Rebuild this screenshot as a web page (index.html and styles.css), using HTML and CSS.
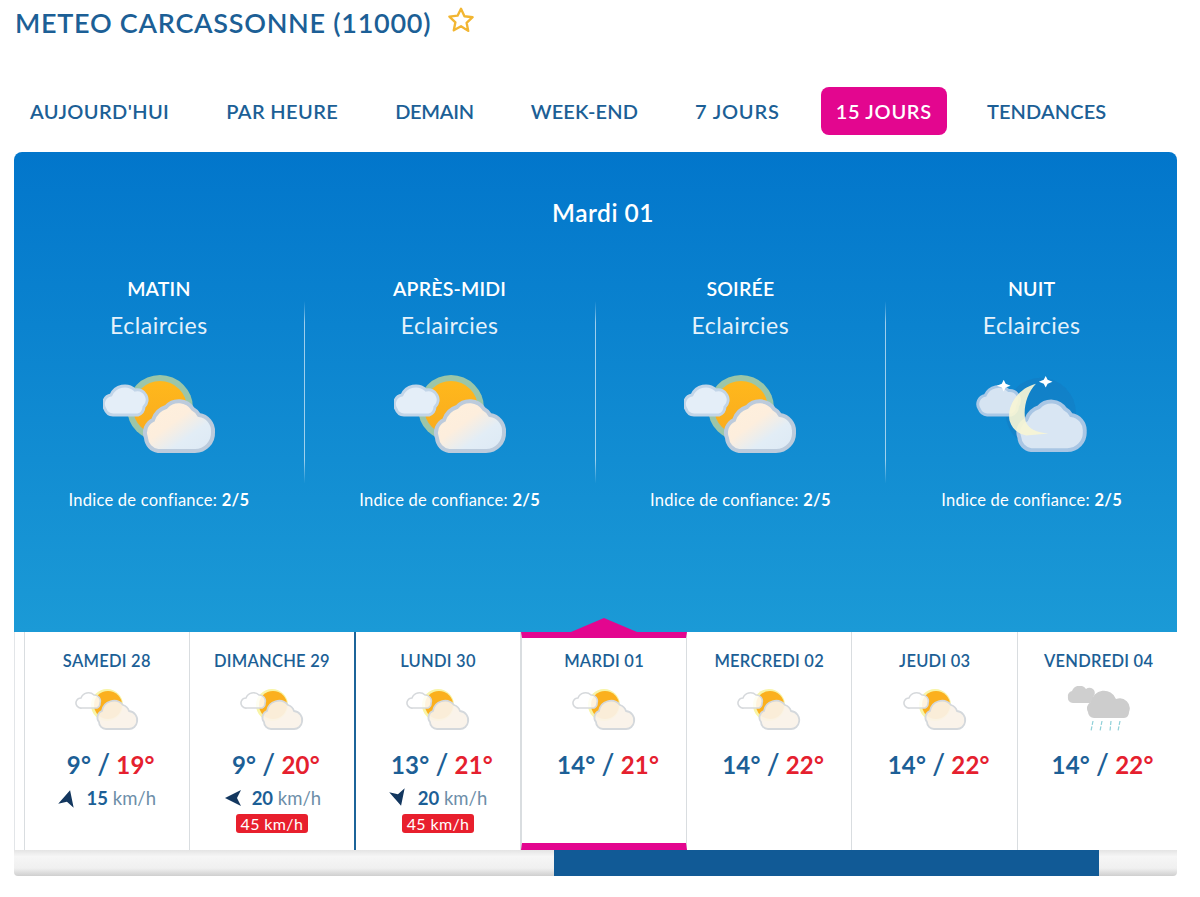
FILE: index.html
```html
<!DOCTYPE html>
<html lang="fr">
<head>
<meta charset="utf-8">
<title>Météo Carcassonne</title>
<link rel="stylesheet" href="styles.css">
</head>
<body>
<svg class="defs" width="0" height="0" aria-hidden="true">
  <defs>
    <linearGradient id="sunfill" x1="0" y1="0" x2="0" y2="1"><stop offset="0" stop-color="#ffb81c"/><stop offset="1" stop-color="#f9ab1e"/></linearGradient>
    <linearGradient id="cloudfill" x1="0" y1="0" x2="1" y2="1"><stop offset="0" stop-color="#fff0dc"/><stop offset="0.42" stop-color="#fdeedd"/><stop offset="0.68" stop-color="#e2edf6"/><stop offset="1" stop-color="#dce9f5"/></linearGradient>
    <symbol id="big-sun" viewBox="0 0 114 82">
      <circle cx="57" cy="36" r="33" fill="#9cc6a8"/>
      <circle cx="57" cy="36" r="27" fill="url(#sunfill)"/>
      <path d="M2 37a9 9 0 0 1 6-14 15 15 0 0 1 24-5 10 10 0 0 1 9 17 9 9 0 0 1-6 8H10a9 9 0 0 1-8-6z" fill="#e4eef8" stroke="#c2d5e8" stroke-width="3"/>
      <path d="M43 66a14 14 0 0 1 7-18 20 20 0 0 1 13-13 17 17 0 0 1 27 2 14 14 0 0 1 6 6 16 16 0 0 1 14 17 18 18 0 0 1-18 19H55a14 14 0 0 1-12-13z" fill="url(#cloudfill)" stroke="#bccbdc" stroke-width="4"/>
    </symbol>
    <symbol id="big-moon" viewBox="0 0 114 84">
      <circle cx="65" cy="42" r="36" fill="#1a6fb5" opacity=".28"/>
      <path d="M2 38a9 9 0 0 1 6-14 15 15 0 0 1 24-5 10 10 0 0 1 9 16 9 9 0 0 1-6 9H10a9 9 0 0 1-8-6z" fill="#d6e4f2" stroke="#a9c8e6" stroke-width="3"/>
      <path d="M43 67a14 14 0 0 1 7-18 20 20 0 0 1 13-13 17 17 0 0 1 27 2 14 14 0 0 1 6 6 16 16 0 0 1 14 17 18 18 0 0 1-18 19H55a14 14 0 0 1-12-13z" fill="#d9e6f3" stroke="#a9c6e4" stroke-width="4"/>
      <path d="M60 12C41 17 30 35 33 50c3 10 11 14 17 15l23-2c-13-1-20-5-23-11-4-12 0-30 10-40z" fill="#f7f5d5" fill-opacity=".92"/>
      <path d="M27 8l2 4 5 2-5 2-2 4-2-4-5-2 5-2zM70 4l2 4 5 2-5 2-2 4-2-4-5-2 5-2z" fill="#fff"/>
    </symbol>
    <symbol id="small-sun" viewBox="0 0 64 44">
      <circle cx="32" cy="17" r="16" fill="#f8f4a6"/>
      <circle cx="33" cy="17" r="14" fill="#fbb01e"/>
      <path d="M2 18a5 5 0 0 1 4-8 8 8 0 0 1 13-3 6 6 0 0 1 6 8 5 5 0 0 1-3 5H7a5 5 0 0 1-5-2z" fill="#fff" fill-opacity=".85" stroke="#d6d9dc" stroke-width="1.6"/>
      <path d="M24 34a7 7 0 0 1 3-11 12 12 0 0 1 21-6 9 9 0 0 1 6 6 9 9 0 0 1 8 11 8 8 0 0 1-8 7H31a7 7 0 0 1-7-7z" fill="#faf2e8" fill-opacity=".92" stroke="#d4d8dc" stroke-width="1.8"/>
    </symbol>
    <symbol id="small-rain" viewBox="0 0 64 48">
      <path d="M1 11a5 5 0 0 1 4-6 8 8 0 0 1 14-2 5 5 0 0 1 7 8 4 4 0 0 1-3 6H6a5 5 0 0 1-5-6z" fill="#cfcfcf"/>
      <path d="M21 26a7 7 0 0 1 3-10 13 13 0 0 1 25-3 10 10 0 0 1 13 13 6 6 0 0 1-5 6H27a6 6 0 0 1-6-6z" fill="#cdcdcd"/>
      <path d="M26 35l-2 10M35 35l-2 10M44 35l-1 10M53 35l-2 10" stroke="#8fd0d8" stroke-width="1.2" stroke-dasharray="4 1.5"/>
    </symbol>
    <symbol id="arrow" viewBox="-10 -10 20 20">
      <path d="M0-8 8 8 0 4-8 8z" fill="#13375f"/>
    </symbol>
  </defs>
</svg>

<header class="title-row">
  <h1 class="title">METEO CARCASSONNE (11000)</h1>
  <svg class="star" viewBox="0 0 26 26"><path d="M13 2.5l3.2 7 7.6.9-5.6 5.2 1.5 7.5L13 18.8l-6.7 3.8 1.5-7.5-5.6-5.2 7.6-.9z" fill="#fff" stroke="#f2b632" stroke-width="2.2" stroke-linejoin="round"/></svg>
</header>

<nav class="tabs">
  <a class="tab">AUJOURD'HUI</a>
  <a class="tab">PAR HEURE</a>
  <a class="tab tab-narrow">DEMAIN</a>
  <a class="tab tab-snug">WEEK-END</a>
  <a class="tab tab-wide">7 JOURS</a>
  <a class="tab tab-active">15 JOURS</a>
  <a class="tab tab-snug">TENDANCES</a>
</nav>

<main class="card">
  <section class="hero">
    <h2 class="hero-day">Mardi 01</h2>
    <div class="periods">
      <article class="period">
        <h3 class="period-name">MATIN</h3>
        <p class="period-desc">Eclaircies</p>
        <svg class="period-icon"><use href="#big-sun"/></svg>
        <p class="period-conf">Indice de confiance: <b>2/5</b></p>
      </article>
      <article class="period">
        <h3 class="period-name">APRÈS-MIDI</h3>
        <p class="period-desc">Eclaircies</p>
        <svg class="period-icon"><use href="#big-sun"/></svg>
        <p class="period-conf">Indice de confiance: <b>2/5</b></p>
      </article>
      <article class="period">
        <h3 class="period-name">SOIRÉE</h3>
        <p class="period-desc">Eclaircies</p>
        <svg class="period-icon"><use href="#big-sun"/></svg>
        <p class="period-conf">Indice de confiance: <b>2/5</b></p>
      </article>
      <article class="period">
        <h3 class="period-name">NUIT</h3>
        <p class="period-desc">Eclaircies</p>
        <svg class="period-icon"><use href="#big-moon"/></svg>
        <p class="period-conf">Indice de confiance: <b>2/5</b></p>
      </article>
    </div>
  </section>

  <section class="days">
    <div class="day-stub"></div>
    <article class="day">
      <h4 class="day-name">SAMEDI 28</h4>
      <svg class="day-icon"><use href="#small-sun"/></svg>
      <p class="temps"><span class="tmin">9°</span> <i>/</i> <span class="tmax">19°</span></p>
      <p class="wind"><svg class="wind-arrow rot-sam"><use href="#arrow"/></svg><b>15</b> km/h</p>
    </article>
    <article class="day day-split">
      <h4 class="day-name">DIMANCHE 29</h4>
      <svg class="day-icon"><use href="#small-sun"/></svg>
      <p class="temps"><span class="tmin">9°</span> <i>/</i> <span class="tmax">20°</span></p>
      <p class="wind"><svg class="wind-arrow rot-dim"><use href="#arrow"/></svg><b>20</b> km/h</p>
      <span class="gust">45 km/h</span>
    </article>
    <article class="day">
      <h4 class="day-name">LUNDI 30</h4>
      <svg class="day-icon"><use href="#small-sun"/></svg>
      <p class="temps"><span class="tmin">13°</span> <i>/</i> <span class="tmax">21°</span></p>
      <p class="wind"><svg class="wind-arrow rot-lun"><use href="#arrow"/></svg><b>20</b> km/h</p>
      <span class="gust">45 km/h</span>
    </article>
    <article class="day day-active">
      <h4 class="day-name">MARDI 01</h4>
      <svg class="day-icon"><use href="#small-sun"/></svg>
      <p class="temps"><span class="tmin">14°</span> <i>/</i> <span class="tmax">21°</span></p>
    </article>
    <article class="day">
      <h4 class="day-name">MERCREDI 02</h4>
      <svg class="day-icon"><use href="#small-sun"/></svg>
      <p class="temps"><span class="tmin">14°</span> <i>/</i> <span class="tmax">22°</span></p>
    </article>
    <article class="day">
      <h4 class="day-name">JEUDI 03</h4>
      <svg class="day-icon"><use href="#small-sun"/></svg>
      <p class="temps"><span class="tmin">14°</span> <i>/</i> <span class="tmax">22°</span></p>
    </article>
    <article class="day day-last">
      <h4 class="day-name">VENDREDI 04</h4>
      <svg class="day-icon day-icon-rain"><use href="#small-rain"/></svg>
      <p class="temps"><span class="tmin">14°</span> <i>/</i> <span class="tmax">22°</span></p>
    </article>
  </section>

  <div class="scroll"><div class="scroll-thumb"></div></div>
</main>
</body>
</html>
```
FILE: styles.css
```css
* { box-sizing: border-box; }
html, body { margin: 0; padding: 0; }
body {
  width: 1200px;
  height: 897px;
  overflow: hidden;
  background: #fff;
  color: #1c5f96;
  font-family: "Lato", "Noto Sans", sans-serif;
}
h1, h2, h3, h4, p { margin: 0; font-weight: inherit; }
.defs { position: absolute; }

.title-row {
  display: flex;
  align-items: flex-start;
  height: 87px;
  padding: 6px 0 0 15px;
}
.title {
  font-size: 27px;
  line-height: 34px;
  font-weight: 600;
  letter-spacing: .72px;
}
.star { width: 28px; height: 28px; margin-left: 16px; }

.tabs {
  display: flex;
  align-items: center;
  height: 48px;
  margin-bottom: 17px;
  padding-left: 15px;
  gap: 27px;
}
.tab {
  padding: 0 15px;
  height: 48px;
  line-height: 48px;
  font-size: 20px;
  font-weight: 600;
  letter-spacing: .38px;
  border-radius: 8px;
}
.tab-narrow { letter-spacing: -.3px; }
.tab-snug { letter-spacing: .12px; }
.tab-wide { letter-spacing: .8px; margin-right: -1px; }
.tab-active { background: #e3068f; color: #fff; letter-spacing: .7px; margin-right: -2px; }

.card {
  width: 1163px;
  margin-left: 14px;
  border-radius: 8px 8px 0 0;
  overflow: hidden;
}
.hero {
  height: 480px;
  padding-top: 46px;
  background: linear-gradient(180deg, #0276cb 0%, #1b9ad6 100%);
  color: #fff;
  text-align: center;
}
.hero-day { padding-left: 15px; font-size: 24.5px; line-height: 30px; font-weight: 600; letter-spacing: .5px; }
.periods { display: grid; grid-template-columns: repeat(4, 1fr); margin-top: 48px; }
.period {
  display: flex;
  flex-direction: column;
  align-items: center;
  border-right: 1px solid transparent;
  border-image: linear-gradient(180deg, rgba(255,255,255,0) 11%, rgba(255,255,255,.6) 20%, rgba(255,255,255,.6) 78%, rgba(255,255,255,0) 88%) 1;
}
.period:last-child { border-right: 0; border-image: none; }
.period-name { font-size: 19.5px; line-height: 26px; font-weight: 600; letter-spacing: .2px; }
.period-desc { font-size: 23px; line-height: 28px; margin-top: 9px; letter-spacing: .5px; color: #e6f2fb; }
.period-icon { flex: none; width: 114px; height: 82px; margin-top: 33px; margin-left: 2px; }
.period-conf { margin-top: 35px; font-size: 16.5px; line-height: 22px; letter-spacing: .25px; }
.period-conf b { font-weight: 700; }

.days {
  display: flex;
  height: 218px;
  background: #fff;
}
.day-stub { flex: 0 0 10.5px; border-left: 1px solid #e2e5e8; border-right: 1px solid #d9dde0; }
.day {
  flex: 0 0 165.6px;
  min-width: 0;
  display: flex;
  flex-direction: column;
  align-items: center;
  padding-top: 19px;
  border-right: 1px solid #d9dde0;
  text-align: center;
}
.day-split { border-right: 2px solid #1c6499; }
.day-last { border-right: 0; flex-basis: 161px; }
.day-active {
  position: relative;
  border-top: 6px solid #e3068f;
  border-bottom: 7px solid #e3068f;
  border-left: 1px solid #d9dde0;
  padding-top: 13px;
}
.day-active::before {
  content: "";
  position: absolute;
  left: 50%;
  top: -20px;
  margin-left: -33px;
  border-left: 33px solid transparent;
  border-right: 33px solid transparent;
  border-bottom: 14px solid #e3068f;
}
.day-name { font-size: 16.5px; line-height: 20px; font-weight: 600; letter-spacing: .25px; }
.day-icon { flex: none; width: 64px; height: 44px; margin-top: 17px; }
.day-icon-rain { height: 48px; margin-top: 15px; margin-bottom: -2px; }
.temps {
  margin-top: 18px;
  padding-left: 8px;
  font-size: 24px;
  line-height: 30px;
  font-weight: 700;
  letter-spacing: .2px;
  white-space: nowrap;
}
.temps i { font-style: normal; font-weight: 600; font-size: 28px; line-height: 24px; }
.tmax { color: #e5202e; }
.wind {
  display: flex;
  align-items: center;
  margin-top: 6px;
  font-size: 18.5px;
  line-height: 24px;
  color: #6d8ea8;
  white-space: pre;
}
.wind b { color: #1c5f96; font-weight: 700; }
.wind-arrow { flex: none; width: 20px; height: 20px; margin-right: 9px; }
.rot-sam { transform: rotate(15deg); }
.rot-dim { transform: rotate(-90deg); }
.rot-lun { transform: rotate(165deg); }
.gust {
  margin-top: 4px;
  padding: 0 5px;
  height: 19px;
  line-height: 19px;
  border-radius: 3px;
  background: #e81f2d;
  color: #fff;
  font-size: 16px;
  letter-spacing: .35px;
}

.scroll {
  height: 26px;
  background: linear-gradient(180deg, #e4e4e4 0%, #f6f6f6 25%, #f0f0f0 70%, #cfcfcf 100%);
  border-radius: 0 0 4px 4px;
}
.scroll-thumb {
  width: 545px;
  height: 100%;
  margin-left: 540px;
  background: #115a96;
}
```
